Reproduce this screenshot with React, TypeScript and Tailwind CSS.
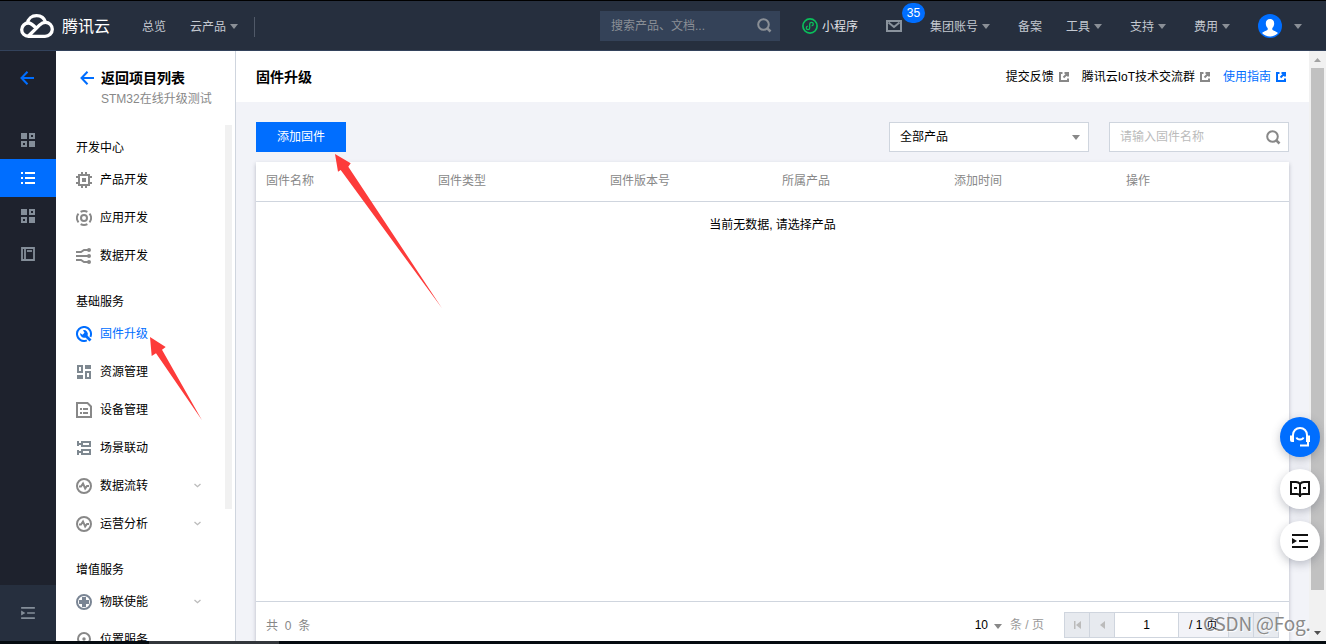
import React from 'react';

const icons: Record<string, React.ReactNode> = {
  chip: (
    <g fill="none" stroke="currentColor" strokeWidth="2">
      <rect x="3" y="3" width="10" height="10" />
      <rect x="6" y="6" width="4" height="4" fill="currentColor" stroke="none" />
      <path d="M6 0v3M10 0v3M6 13v3M10 13v3M0 5h3M0 11h3M13 5h3M13 11h3" />
    </g>
  ),
  target: (
    <g fill="none" stroke="currentColor" strokeWidth="2">
      <circle cx="8" cy="8" r="3" />
      <path d="M4.6 1.9a7 7 0 016.8 0M4.6 14.1a7 7 0 006.8 0M2.5 3.7a7 7 0 000 8.6M13.5 3.7a7 7 0 010 8.6" strokeWidth="1.9" />
    </g>
  ),
  flow: (
    <g fill="none" stroke="currentColor" strokeWidth="2">
      <path d="M0 4h5l3-2h5M0 8h13M0 12h5l3 2h5" />
      <g fill="currentColor" stroke="none">
        <circle cx="13" cy="2" r="2" />
        <circle cx="13" cy="8" r="2" />
        <circle cx="13" cy="14" r="2" />
      </g>
    </g>
  ),
  wrench: (
    <g fill="none" stroke="currentColor">
      <path d="M10.8 14.4A7 7 0 1114.4 10.8" strokeWidth="2" />
      <path d="M8.2 8.2l6.3 6.3" strokeWidth="2.8" />
      <path d="M7 4.2a3.9 3.9 0 014.6 5.2l-2 2A3.9 3.9 0 014.2 7l2.3 1.8 2-2z" fill="currentColor" stroke="none" />
    </g>
  ),
  blocks: (
    <g fill="none" stroke="#7e8890" strokeWidth="2">
      <path d="M2 2h4v6H2zM10 8h4v6h-4z" />
      <path d="M9 3h6M1 13h6" strokeWidth="4" />
    </g>
  ),
  device: (
    <g fill="none" stroke="currentColor" strokeWidth="2">
      <path d="M1 1h10.5L15 4.5V15H1z" />
      <path d="M4 7h2M7 7h5M4 11h2M7 11h5" />
    </g>
  ),
  scene: (
    <g fill="none" stroke="#7e8890" strokeWidth="2">
      <path d="M6 2h8v4H6zM6 10h8v4H6zM1 4h5M1 12h5M2 1v5M2 10v5" />
    </g>
  ),
  pulse: (
    <g fill="none" stroke="currentColor" strokeWidth="2">
      <circle cx="8" cy="8" r="7" />
      <path d="M3 8.5h2L7 5.500l2.2 5L11 8h2" strokeWidth="1.9" />
    </g>
  ),
  plus: (
    <g fill="none" stroke="#7a8594">
      <circle cx="8" cy="8" r="7" strokeWidth="2" />
      <path d="M8 3v10M3 8h10" strokeWidth="4" />
    </g>
  ),
  location: (
    <g fill="none" stroke="currentColor" strokeWidth="2">
      <path d="M8 15C4 11.500 2 9.500 2 7a6 6 0 0112 0c0 2.500-2 4.500-6 8z" />
      <circle cx="8" cy="7" r="1.700" fill="currentColor" stroke="none" />
    </g>
  ),
};

const sections = [
  {
    title: '开发中心',
    items: [
      { label: '产品开发', icon: 'chip' },
      { label: '应用开发', icon: 'target' },
      { label: '数据开发', icon: 'flow' },
    ],
  },
  {
    title: '基础服务',
    items: [
      { label: '固件升级', icon: 'wrench', active: true },
      { label: '资源管理', icon: 'blocks' },
      { label: '设备管理', icon: 'device' },
      { label: '场景联动', icon: 'scene' },
      { label: '数据流转', icon: 'pulse', more: true },
      { label: '运营分析', icon: 'pulse', more: true },
    ],
  },
  {
    title: '增值服务',
    items: [
      { label: '物联使能', icon: 'plus', more: true },
      { label: '位置服务', icon: 'location' },
    ],
  },
];

const columns = ['固件名称', '固件类型', '固件版本号', '所属产品', '添加时间', '操作'];

const Caret = ({ className = '' }: { className?: string }) => (
  <svg className={`w-2 h-[5px] shrink-0 ${className}`} viewBox="0 0 8 5" fill="currentColor">
    <path d="M0 0h8L4 5z" />
  </svg>
);

const SearchIcon = ({ className = '' }: { className?: string }) => (
  <svg className={`w-[15px] h-[15px] shrink-0 ${className}`} viewBox="0 0 15 15" fill="none" stroke="currentColor" strokeWidth="2">
    <circle cx="6.500" cy="6.500" r="5.300" />
    <path d="M10.300 10.300l3.200 3.200" strokeWidth="2.600" />
  </svg>
);

const BackArrow = () => (
  <svg className="w-[14px] h-[14px] shrink-0 text-[#006eff]" viewBox="0 0 14 14" fill="none" stroke="currentColor" strokeWidth="2">
    <path d="M7.500 0.700L1.500 7l6 6.300M1.500 7H14" />
  </svg>
);

const ExternalIcon = () => (
  <svg className="w-[10px] h-[10px] ml-[5px] mr-px shrink-0" viewBox="0 0 10 10" fill="none" stroke="currentColor" strokeWidth="2">
    <path d="M3.500 1H1v8h8V6.500M5.500 1H9v3.500M8.500 1.500L4.500 5.500" />
  </svg>
);

const GridIcon = () => (
  <svg className="w-3.5 h-3.5" viewBox="0 0 14 14" fill="none" stroke="currentColor" strokeWidth="2">
    <path d="M0 0h6v6H0zM8 8h6v6H8z" fill="currentColor" stroke="none" />
    <path d="M9 1h4v4H9zM1 9h4v4H1z" />
  </svg>
);

const ListIcon = () => (
  <svg className="w-3.5 h-3.5" viewBox="0 0 14 14" stroke="currentColor" strokeWidth="2">
    <path d="M0 2h2M4 2h10M0 7h2M4 7h10M0 12h2M4 12h10" />
  </svg>
);

const BookIcon = () => (
  <svg className="w-3.5 h-3.5" viewBox="0 0 14 14" fill="none" stroke="currentColor">
    <path d="M1 1h12v12H1z" strokeWidth="1.800" />
    <path d="M4 1v12" strokeWidth="1.800" />
    <path d="M6 4h5" strokeWidth="1.800" />
  </svg>
);

const IndentIcon = ({ className }: { className: string }) => (
  <svg className={className} viewBox="0 0 16 14" fill="none" stroke="currentColor" strokeWidth="2">
    <path d="M0 1h16M7 7h9M0 13h16" />
    <path d="M0 4l5 3-5 3z" fill="currentColor" stroke="none" />
  </svg>
);

const TopBar = () => (
  <header className="h-[51px] shrink-0 flex items-center border-t border-b border-t-black border-b-[#33425b] bg-[#262f3e] text-[#c3c8d0]">
    <svg className="ml-5 w-[34px] h-6 shrink-0" viewBox="0 0 34 24" fill="none" stroke="#fff" strokeWidth="3.300">
      <path d="M7.500 9.500C8 4.500 12 1.700 16.500 1.700c4.500 0 8 2.800 9.200 6.800" />
      <path d="M15.500 13.500C12.500 10.500 11 9 8.500 9 4.800 9 1.700 12 1.700 15.700c0 3.700 3 6.600 6.800 6.600H25c4 0 7.300-3 7.300-7S29.200 8.300 25.500 8.300c-2.500 0-4 .9-6 2.900L8.500 22" />
    </svg>
    <span className="ml-[8px] w-12 pt-0.5 text-base leading-none text-white">腾讯云</span>
    <span className="ml-8 w-6 pt-0.5">总览</span>
    <span className="ml-6 w-9 pt-0.5">云产品</span>
    <Caret className="ml-1 mt-0.5 text-[#8a8f96]" />
    <i className="ml-4 mt-[3px] w-px h-5 bg-[#505968]" />
    <div className="ml-[345px] w-[180px] h-[30px] shrink-0 flex items-center justify-between pl-[11px] pr-2 bg-[#344258] text-[#8a8f96]">
      搜索产品、文档...
      <SearchIcon />
    </div>
    <svg className="ml-[22px] w-4 h-4 shrink-0" viewBox="0 0 16 16" fill="none" stroke="#0abf5b">
      <circle cx="8" cy="8" r="7.100" strokeWidth="1.700" />
      <path d="M5.900 8.200a1.700 1.700 0 101.800 1.800V6a1.800 1.800 0 111.900 1.900" strokeWidth="1.300" />
    </svg>
    <span className="ml-1 w-9 pt-0.5 text-[#e0e2e6]">小程序</span>
    <div className="relative ml-7 w-4 h-3">
      <svg className="w-4 h-3 text-[#8a939d]" viewBox="0 0 16 12" fill="none" stroke="currentColor" strokeWidth="2">
        <path d="M1 1h14v10H1zM2.500 2.500L8 7l5.500-4.500" />
      </svg>
      <b className="absolute left-4 -top-[17px] w-[23px] h-5 rounded-full bg-[#006eff] text-center text-xs leading-5 font-medium text-white">35</b>
    </div>
    <span className="ml-7 w-12 pt-0.5">集团账号</span>
    <Caret className="ml-1 mt-0.5 text-[#8a8f96]" />
    <span className="ml-7 w-6 pt-0.5">备案</span>
    {['工具', '支持', '费用'].map((name, i) => (
      <span key={name} className={`flex items-center gap-1 ${i === 0 ? 'ml-6' : 'ml-7'}`}>
        <span className="pt-0.5">{name}</span>
        <Caret className="mt-0.5 text-[#8a8f96]" />
      </span>
    ))}
    <svg className="ml-7 w-6 h-6 shrink-0" viewBox="0 0 24 24">
      <circle cx="12" cy="12" r="12" fill="#006eff" />
      <path d="M12 5c2.600 0 4.200 1.700 4.200 4.400 0 1.800-.7 3.600-1.900 4.500v1.600c.4 1.300 4.200 1.800 5.700 3.600a11 11 0 01-16 0c1.500-1.800 5.300-2.300 5.700-3.600v-1.600c-1.200-.9-1.900-2.700-1.900-4.500C7.800 6.700 9.400 5 12 5z" fill="#fff" />
    </svg>
    <Caret className="ml-3 mt-0.5 text-[#8a8f96]" />
  </header>
);

const Rail = () => (
  <aside className="w-14 shrink-0 flex flex-col bg-[#1e222d] text-[#848e99]">
    <div className="h-[70px] pt-5 pr-0.5 flex justify-center">
      <BackArrow />
    </div>
    <div className="h-[38px] flex items-center justify-center"><GridIcon /></div>
    <div className="h-[38px] flex items-center justify-center bg-[#006eff] text-white"><ListIcon /></div>
    <div className="h-[38px] flex items-center justify-center"><GridIcon /></div>
    <div className="h-[38px] flex items-center justify-center"><BookIcon /></div>
    <div className="mt-auto h-14 flex items-center justify-center bg-[#262f3e]">
      <IndentIcon className="w-3.5 h-3" />
    </div>
  </aside>
);

const Sidebar = () => (
  <nav className="w-[180px] shrink-0 flex flex-col overflow-hidden border-r border-[#cfd5de] bg-white">
    <div className="h-[69px] shrink-0 pt-[17px] pl-6 flex items-start">
      <span className="pt-[3px]"><BackArrow /></span>
      <div className="pl-[7px]">
        <h2 className="text-sm leading-5 font-bold">返回项目列表</h2>
        <p className="pt-px leading-5 text-[#888]">STM32在线升级测试</p>
      </div>
    </div>
    <div className="flex-1 min-h-0 flex">
      <div className="flex-1 overflow-hidden">
        {sections.map((s) => (
          <div key={s.title}>
            <div className="h-10 pt-4 pl-5 flex items-center">{s.title}</div>
            {s.items.map((item) => (
              <div key={item.label} className={`h-[38px] pt-0.5 pl-5 pr-6 flex items-center ${item.active ? 'text-[#006eff]' : ''}`}>
                <svg className={`w-4 h-4 shrink-0 ${item.active ? '' : 'text-[#888]'}`} viewBox="0 0 16 16">
                  {icons[item.icon]}
                </svg>
                <span className="ml-2 flex-1">{item.label}</span>
                {item.more && (
                  <svg className="w-[7px] h-[5px] mb-0.5" viewBox="0 0 7 5" fill="none" stroke="#bbb" strokeWidth="1.300">
                    <path d="M0.500 1l3 2.700 3-2.700" />
                  </svg>
                )}
              </div>
            ))}
          </div>
        ))}
      </div>
      <div className="mt-[5px] mr-[3px] w-[7px] h-[384px] bg-[#f1f1f1]" />
    </div>
  </nav>
);

const Pager = () => (
  <div className="h-[26px] flex border border-[#cfd5de] bg-[#f2f3f8] text-[#bbb]">
    <span className="w-6 flex items-center justify-center bg-[#e7eaef]">
      <svg className="w-[7px] h-2" viewBox="0 0 7 8" fill="currentColor"><path d="M0 0h1.500v8H0zM7 0v8L2 4z" /></svg>
    </span>
    <span className="w-[25px] flex items-center justify-center border-l border-[#cfd5de] bg-[#e7eaef]">
      <svg className="w-[5px] h-2" viewBox="0 0 5 8" fill="currentColor"><path d="M5 0v8L0 4z" /></svg>
    </span>
    <span className="w-16 flex items-center justify-center border-l border-[#cfd5de] bg-white text-black">1</span>
    <span className="w-[50px] pl-[10px] flex items-center border-l border-[#cfd5de] text-black">/ 1 页</span>
    <span className="w-[25px] border-l border-[#cfd5de] bg-[#e7eaef]" />
    <span className="w-[25px] border-l border-[#cfd5de] bg-[#e7eaef]" />
  </div>
);

const Firmware = () => (
  <main className="flex-1 min-w-0 flex flex-col bg-[#f2f3f8]">
    <div className="h-[51px] shrink-0 pl-5 pr-[22px] flex items-center bg-white">
      <h1 className="flex-1 text-sm font-bold">固件升级</h1>
      <div className="flex items-center gap-3">
        <a className="flex items-center">提交反馈<span className="text-[#888]"><ExternalIcon /></span></a>
        <a className="flex items-center">腾讯云IoT技术交流群<span className="text-[#888]"><ExternalIcon /></span></a>
        <a className="flex items-center text-[#006eff]">使用指南<ExternalIcon /></a>
      </div>
    </div>
    <div className="flex-1 min-h-0 px-5 pt-5 flex flex-col">
      <div className="h-[30px] shrink-0 flex">
        <button className="w-[90px] bg-[#006eff] text-white">添加固件</button>
        <div className="ml-auto w-[200px] px-[10px] pr-2 flex items-center justify-between border border-[#cfd5de] bg-white">
          全部产品
          <Caret className="text-[#888]" />
        </div>
        <div className="ml-5 w-[180px] pl-[10px] pr-[7px] flex items-center justify-between border border-[#cfd5de] bg-white text-[#bbb]">
          请输入固件名称
          <SearchIcon className="text-[#888]" />
        </div>
      </div>
      <div className="mt-[10px] flex-1 min-h-0 flex flex-col bg-white shadow-[0_2px_4px_rgba(54,58,80,0.32)]">
        <div className="h-10 shrink-0 pb-px flex items-center border-b border-[#cfd5de] text-[#888]">
          {columns.map((c) => (
            <span key={c} className="w-[172px] pl-[10px]">{c}</span>
          ))}
        </div>
        <div className="flex-1 pt-[15px] text-center">当前无数据, 请选择产品</div>
        <div className="h-10 shrink-0 pt-[7px] px-[10px] flex items-center border-t border-[#cfd5de] text-[#888]">
          <span className="flex-1 pt-0.5 [word-spacing:3.500px]">共 0 条</span>
          <span className="text-black">10</span>
          <Caret className="ml-[6px] mt-0.5" />
          <span className="ml-2 mr-5 text-[#999]">条 / 页</span>
          <Pager />
        </div>
      </div>
    </div>
  </main>
);

const Scrollbar = () => (
  <div className="w-[17px] shrink-0 flex flex-col items-center bg-[#f1f1f1]">
    <div className="h-[17px] flex items-center">
      <svg className="w-[7px] h-1" viewBox="0 0 7 4" fill="#a3a3a3"><path d="M3.500 0L7 4H0z" /></svg>
    </div>
    <div className="w-[13px] h-[522px] bg-[#c1c1c1]" />
    <div className="mt-auto h-[17px] flex items-center">
      <svg className="w-[7px] h-1" viewBox="0 0 7 4" fill="#505050"><path d="M0 0h7L3.500 4z" /></svg>
    </div>
  </div>
);

const FloatingTools = () => (
  <div className="absolute right-[6px] top-[417px] flex flex-col gap-3 text-[#111]">
    <div className="w-10 h-10 flex items-center justify-center rounded-full bg-[#006eff] text-white shadow-[0_3px_10px_rgba(54,58,80,0.3)]">
      <svg className="w-5 h-5" viewBox="0 0 20 20" fill="none" stroke="currentColor" strokeWidth="2">
        <path d="M3 9V8c0-4 3-7 7-7s7 3 7 7v1M6.500 10.500c1 2.700 6 2.700 7 0M18 14v4.500h-8" />
        <path d="M0 8.500h4V15H2a2 2 0 01-2-2zM16 8.500h4V15h-4z" fill="currentColor" stroke="none" />
      </svg>
    </div>
    <div className="w-10 h-10 flex items-center justify-center rounded-full bg-white shadow-[0_3px_10px_rgba(54,58,80,0.3)]">
      <svg className="w-5 h-4" viewBox="0 0 20 16" fill="none" stroke="currentColor" strokeWidth="2">
        <path d="M10 3C9 1.500 8 1 6 1H1v12h6c1.500 0 2.500.5 3 1.500.5-1 1.500-1.500 3-1.500h6V1h-5c-2 0-3 .5-4 2zM10 3v13M4 7h3M13 7h3" />
      </svg>
    </div>
    <div className="w-10 h-10 flex items-center justify-center rounded-full bg-white shadow-[0_3px_10px_rgba(54,58,80,0.3)]">
      <IndentIcon className="w-4 h-3.5" />
    </div>
  </div>
);

const App: React.FC = () => {
  return (
    <div className="relative w-[1326px] h-[644px] flex flex-col overflow-hidden text-xs text-black font-['Liberation_Sans','Noto_Sans_CJK_SC',sans-serif]">
      <TopBar />
      <div className="flex-1 min-h-0 flex">
        <Rail />
        <Sidebar />
        <Firmware />
        <Scrollbar />
      </div>
      <div className="h-[3px] shrink-0 bg-[#050b10]">
        <div className="ml-[149px] w-[130px] h-full bg-[#32363b]" />
      </div>

      <FloatingTools />

      {/* callout arrows */}
      <svg className="absolute inset-0 w-full h-full pointer-events-none" viewBox="0 0 1326 644" fill="#fd3b3a">
        <path d="M335 154l15.700 9.300-2.400 3.400L442 308.300 340.700 170l-2.700 1.700z" />
        <path d="M150 337l15.700 10-3.700 2.700 40 70.500L156 353.300l-4.300 2.700z" />
      </svg>
      <span className="absolute left-[1203px] top-[611px] text-[19px] leading-6 tracking-[-0.2px] text-[#8a8a8a] whitespace-nowrap font-['Noto_Sans_CJK_SC',sans-serif] [text-shadow:1px_1px_1px_white]">CSDN @Fog.</span>
    </div>
  );
};

export default App;
